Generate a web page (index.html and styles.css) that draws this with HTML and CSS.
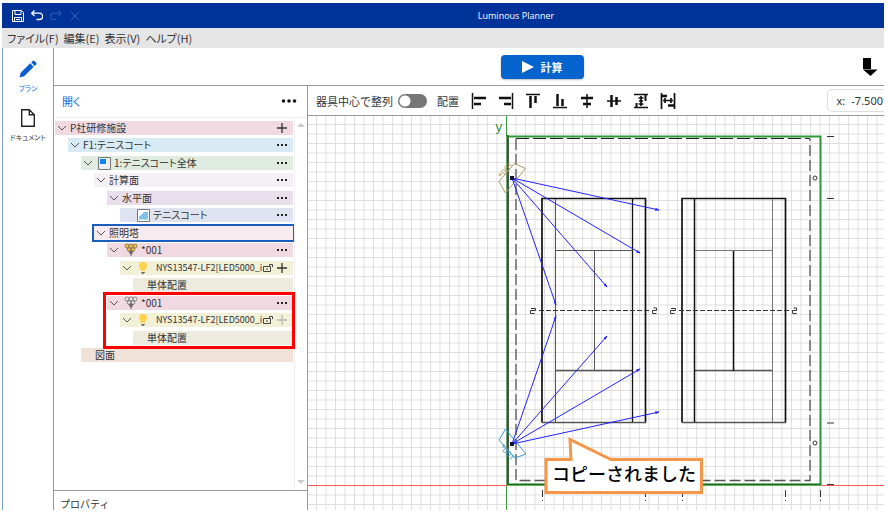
FILE: index.html
```html
<!DOCTYPE html>
<html lang="ja">
<head>
	<meta charset="UTF-8">
	<meta name="viewport" content="width=device-width, initial-scale=1">
	<title>Luminous Planner</title>
	<link rel="stylesheet" href="styles.css">
</head>
<body>
	<!-- shared icons -->
	<svg class="sprite" aria-hidden="true">
		<symbol id="chevron" viewBox="0 0 10 10"><path d="M1 3l4 4 4-4" fill="none" stroke="#555"/></symbol>
		<symbol id="dots" viewBox="0 0 12 12"><path d="M1 5h2v2H1zM5 5h2v2H5zM9 5h2v2H9z" fill="#222"/></symbol>
		<symbol id="plus" viewBox="0 0 12 12"><path d="M6 1v10M1 6h10" fill="none" stroke="currentColor" stroke-width="1.3"/></symbol>
		<symbol id="lamps" viewBox="0 0 14 14">
			<path d="M3 5l4 5 4-5M7 5v8M4 8h6M5 10h4" fill="none" stroke="#555"/>
			<g fill="currentColor" stroke="#666" stroke-width=".7">
				<circle cx="3" cy="3" r="2"/><circle cx="7" cy="3" r="2"/><circle cx="11" cy="3" r="2"/>
				<circle cx="5" cy="6.5" r="1.8"/><circle cx="9" cy="6.5" r="1.8"/>
			</g>
		</symbol>
		<symbol id="bulb" viewBox="0 0 10 14">
			<path d="M5 1a4 4 0 0 0-4 4c0 2 2 3 2 5h4c0-2 2-3 2-5a4 4 0 0 0-4-4z" fill="#ffd24d"/>
			<path d="M3 11h4v1H6v1H4v-1H3z" fill="#777"/>
		</symbol>
		<symbol id="lock" viewBox="0 0 11 10">
			<path d="M.5 3.500h7v5h-7zM6.500 3V1.500h3V4M4 5v2" fill="none" stroke="#444"/>
		</symbol>
	</svg>

	<div class="app">
		<header class="titlebar">
			<div class="quick">
				<button type="button" aria-label="保存"><svg viewBox="0 0 12 12"><path d="M.5.5h9l2 2v9H.500zM3 .5v4h6v-4M2.500 11.500v-4h7v4M4 9.500h4" fill="none" stroke="#fff"/></svg></button>
				<button type="button" aria-label="元に戻す"><svg viewBox="0 0 12 12"><path d="M3.500 .5L.7 3.200l2.800 2.800M1 3.200h7.500a3 3 0 0 1 0 6.300H5.500" fill="none" stroke="#fff" stroke-width="1.300"/></svg></button>
				<button type="button" aria-label="やり直し" disabled><svg viewBox="0 0 12 12"><path d="M8.500 .5l2.800 2.700-2.800 2.800M11 3.200H3.500a3 3 0 0 0 0 6.300h3" fill="none" stroke="#3a62b8"/></svg></button>
				<button type="button" aria-label="削除" disabled><svg viewBox="0 0 12 12"><path d="M2 2l8 8M10 2l-8 8" fill="none" stroke="#3a62b8"/></svg></button>
			</div>
			<h1>Luminous Planner</h1>
		</header>

		<nav class="menubar">
			<a href="#">ファイル(F)</a>
			<a href="#">編集(E)</a>
			<a href="#">表示(V)</a>
			<a href="#">ヘルプ(H)</a>
		</nav>

		<div class="body">
			<nav class="rail">
				<a href="#" class="active">
					<svg viewBox="0 0 18 18"><path d="M.5 17.500l1.200-4.700L11.200 3.300l3.500 3.500-9.500 9.500zM12.200 2.400l1.500-1.500q1-.7 1.800 0l1.700 1.700q.7.900 0 1.800l-1.500 1.500z" fill="#0a5fd0"/></svg>
					プラン
				</a>
				<a href="#">
					<svg viewBox="0 0 18 18"><path d="M2.700.7h7.600l5 5v11.600H2.700zM10.300.7v5h5" fill="none" stroke="#222" stroke-width="1.400"/></svg>
					ドキュメント
				</a>
			</nav>

			<div class="work">
				<div class="actions">
					<button type="button" class="calc">
						<svg viewBox="0 0 12 12"><path d="M0 0l12 6-12 6z" fill="#fff"/></svg>
						計算
					</button>
					<button type="button" class="more" aria-label="出力">
						<svg viewBox="0 0 16 18"><path d="M1 0h8v11H1z"/><path d="M1 11.500h14.500l-7 6.500z"/></svg>
					</button>
				</div>

				<div class="panes">
					<aside class="side">
						<div class="side-head">
							<a href="#">開く</a>
							<button type="button" aria-label="メニュー"><svg viewBox="0 0 16 6"><circle cx="2.500" cy="3" r="1.800"/><circle cx="8" cy="3" r="1.800"/><circle cx="13.500" cy="3" r="1.800"/></svg></button>
						</div>
						<div class="tree-wrap">
							<ul class="tree">
								<li class="row l0 pink">
									<svg class="tw"><use href="#chevron"/></svg><span>P社研修施設</span>
									<button type="button" aria-label="追加"><svg><use href="#plus"/></svg></button>
								</li>
								<li class="row l1 sky">
									<svg class="tw"><use href="#chevron"/></svg><span>F1:テニスコート</span>
									<button type="button" aria-label="メニュー"><svg><use href="#dots"/></svg></button>
								</li>
								<li class="row l2 green">
									<svg class="tw"><use href="#chevron"/></svg>
									<svg class="thumb" viewBox="0 0 13 13"><path d="M.5.500h12v12H.500z" fill="#e8eef4" stroke="#777"/><path d="M2 2h6v5H2z" fill="#0b85f0"/><path d="M8.500 3v5.500H3" fill="none" stroke="#fff"/></svg>
									<span>1:テニスコート全体</span>
									<button type="button" aria-label="メニュー"><svg><use href="#dots"/></svg></button>
								</li>
								<li class="row l3 lilac">
									<svg class="tw"><use href="#chevron"/></svg><span>計算面</span>
									<button type="button" aria-label="メニュー"><svg><use href="#dots"/></svg></button>
								</li>
								<li class="row l4 purple">
									<svg class="tw"><use href="#chevron"/></svg><span>水平面</span>
									<button type="button" aria-label="メニュー"><svg><use href="#dots"/></svg></button>
								</li>
								<li class="row l5 slate">
									<svg class="thumb leaf" viewBox="0 0 13 13"><path d="M.5.500h12v12H.500z" fill="#fff" stroke="#777"/><path d="M2 10.500V8l5-5h4v7.500z" fill="#7fc0ee"/></svg>
									<span>テニスコート</span>
									<button type="button" aria-label="メニュー"><svg><use href="#dots"/></svg></button>
								</li>
								<li class="row l3 rose selected">
									<svg class="tw"><use href="#chevron"/></svg><span>照明塔</span>
								</li>
								<li class="row l4 pink">
									<svg class="tw"><use href="#chevron"/></svg><svg class="lamps"><use href="#lamps"/></svg><span>*001</span>
									<button type="button" aria-label="メニュー"><svg><use href="#dots"/></svg></button>
								</li>
								<li class="row l5 yellow">
									<svg class="tw"><use href="#chevron"/></svg><svg class="bulb"><use href="#bulb"/></svg><span>NYS13547-LF2[LED5000_i</span>
									<svg class="lock"><use href="#lock"/></svg>
									<button type="button" aria-label="追加"><svg><use href="#plus"/></svg></button>
								</li>
								<li class="row l6 olive"><span>単体配置</span></li>
								<li class="copied">
									<ul class="tree-group">
										<li class="row l4 pink">
											<svg class="tw"><use href="#chevron"/></svg><svg class="lamps off"><use href="#lamps"/></svg><span>*001</span>
											<button type="button" aria-label="メニュー"><svg><use href="#dots"/></svg></button>
										</li>
										<li class="row l5 yellow">
											<svg class="tw"><use href="#chevron"/></svg><svg class="bulb"><use href="#bulb"/></svg><span>NYS13547-LF2[LED5000_i</span>
											<svg class="lock"><use href="#lock"/></svg>
											<button type="button" aria-label="追加" disabled><svg><use href="#plus"/></svg></button>
										</li>
										<li class="row l6 olive"><span>単体配置</span></li>
									</ul>
								</li>
								<li class="row l2 peach"><span>図面</span></li>
							</ul>
							<div class="scroll">
								<svg viewBox="0 0 8 4"><path d="M0 4l4-4 4 4z"/></svg>
								<svg viewBox="0 0 8 4"><path d="M0 0l4 4 4-4z"/></svg>
							</div>
						</div>
						<div class="props">プロパティ</div>
					</aside>

					<main class="main">
						<div class="tools">
							<label for="center">器具中心で整列</label>
							<input type="checkbox" id="center" class="switch">
							<span class="place">配置</span>
							<div class="aligns">
								<button type="button" aria-label="左揃え"><svg viewBox="0 0 16 16"><path d="M1.500 0v16" stroke-width="1.500"/><path d="M3 5h12M3 11h7" stroke-width="2.500"/></svg></button>
								<button type="button" aria-label="右揃え"><svg viewBox="0 0 16 16"><path d="M14.500 0v16" stroke-width="1.500"/><path d="M1 5h12M6 11h7" stroke-width="2.500"/></svg></button>
								<button type="button" aria-label="上揃え"><svg viewBox="0 0 16 16"><path d="M1 1.500h14" stroke-width="1.500"/><path d="M5.500 3v12M10.500 3v7" stroke-width="2.500"/></svg></button>
								<button type="button" aria-label="下揃え"><svg viewBox="0 0 16 16"><path d="M1 14.500h14" stroke-width="1.500"/><path d="M5.500 1v12M10.500 6v7" stroke-width="2.500"/></svg></button>
								<button type="button" aria-label="左右中央"><svg viewBox="0 0 16 16"><path d="M8 1v14" stroke-width="1.500"/><path d="M2 5h12M4 11h8" stroke-width="2.500"/></svg></button>
								<button type="button" aria-label="上下中央"><svg viewBox="0 0 16 16"><path d="M1 8h14" stroke-width="1.500"/><path d="M5.500 2v12M10.500 4v8" stroke-width="2.500"/></svg></button>
								<button type="button" aria-label="上下等間隔"><svg viewBox="0 0 16 16"><path d="M1 1.500h14M1 14.500h14M8 3v10M5.500 5h5M5.500 11h5M6 8h4" stroke-width="1.700"/><path d="M12.500 2v6M3.500 10v4" stroke-width="2"/></svg></button>
								<button type="button" aria-label="左右等間隔"><svg viewBox="0 0 16 16"><path d="M1.500 0v16M14.500 0v16M3 7.500h10M5 5v5M11 5v5" stroke-width="1.700"/><path d="M2 3h5M8 12.500h6" stroke-width="2.500"/></svg></button>
							</div>
							<div class="coord"><span>x:</span><span>-7.500</span></div>
						</div>

						<!-- drawing area, one grid square is 9.5 units -->
						<svg class="plan" role="img" aria-label="平面図">
							<defs>
								<pattern id="grid" x="506" y="485" width="9.5" height="9.5" patternUnits="userSpaceOnUse">
									<path d="M.5 0v9.500M0 .5h9.500" stroke="#dedede" fill="none"/>
								</pattern>
								<marker id="tip" viewBox="0 0 6 4" refX="5" refY="2" markerWidth="5" markerHeight="3" orient="auto"><path d="M0 0l6 2-6 2z" fill="#22f"/></marker>
							</defs>
							<g transform="translate(-308 -116)" fill="none">
								<rect x="308" y="116" width="2000" height="2000" fill="url(#grid)"/>
								<path d="M308 485.500H507" stroke="#ff5a5a"/>
								<path d="M821 485.500H2308" stroke="#ff5a5a"/>
								<path d="M506.500 116v20M506.500 486v30" stroke="#3d9a3d"/>
								<path d="M508 136.500h312.500V485" stroke="#2f9a36" stroke-width="2"/>
								<path d="M507.500 135v349.500H821" stroke="#0c700c" stroke-width="2"/>
								<path d="M508.500 138v345" stroke="#000" stroke-opacity=".5"/>

								<path d="M516 138.500h294" stroke="#222" stroke-dasharray="13 4"/>
								<path d="M516 139v341.500h294V139" stroke="#555" stroke-width="1.300" stroke-dasharray="11 4"/>

								<!-- left court -->
								<path d="M542 422.500v-224h103.500v224" stroke="#111" stroke-width="1.700"/>
								<path d="M542 422.500h104M555.500 370.500h77" stroke="#555" stroke-width="1.500"/>
								<path d="M632.500 199v223" stroke="#111" stroke-width="1.300"/>
								<path d="M555.500 199v223M594.500 250v121M555.500 250.500h77" stroke="#555"/>

								<!-- right court -->
								<path d="M682 422.500v-224h103.500v224" stroke="#111" stroke-width="1.700"/>
								<path d="M682 422.500h104M695 370.500h77" stroke="#555" stroke-width="1.500"/>
								<path d="M694.500 199v223M733.500 250v121" stroke="#111" stroke-width="1.500"/>
								<path d="M772.500 199v223M695 250.500h77" stroke="#777"/>

								<path d="M539 310.500h110M679 310.500h110" stroke="#333" stroke-dasharray="5 2"/>
								<path d="M531 308.500h4.500v2h-5v3h4M652.500 313.500h4M652.500 313v-2.500h4v-2.500h-3M671 308.500h4.500v2h-5v3h4M792.500 313.500h4M792.500 313v-2.500h4v-2.500h-3" stroke="#333"/>
								<circle cx="815" cy="178" r="2" stroke="#333"/>
								<circle cx="815" cy="443" r="2" stroke="#333"/>

								<path d="M827 136.500h10M827 198.500h10M827 423h10M827 484.500h10M542.500 490v12M645.500 490v12M682.500 490v12M785.500 490v12M820.500 490v12" stroke="#333" stroke-dasharray="7 3 1 9"/>

								<path d="M514.500 163.500l11 5-20 24.500-6.500-11.500z" stroke="#a99b63"/>
								<path d="M505.500 429l20.500 25-11 4-16-18z" stroke="#3a99d8"/>
								<g stroke="#22f" marker-end="url(#tip)">
									<path d="M512 178l147 32"/><path d="M512 178l128 75"/><path d="M512 178l95 109"/><path d="M512 178l44 127"/>
									<path d="M512 444l147-32"/><path d="M512 444l128-75"/><path d="M512 444l95-108"/><path d="M512 444l44-128"/>
								</g>
								<path d="M510 176h4v4h-4zM510 442h4v4h-4z" fill="#113"/>
								<text class="tag" fill="#a99b63" transform="translate(502 179) rotate(-50)">*001</text>
								<text class="tag" fill="#3a99d8" transform="translate(499 447) rotate(50)">*001</text>
								<text class="axis" x="495" y="131">y</text>

								<path d="M546 459.500h25l-1-20 41 20h90.500v33H546z" fill="#fff" stroke="#f79646" stroke-width="3"/>
								<text class="callout" x="624" y="481" text-anchor="middle">コピーされました</text>
							</g>
						</svg>
					</main>
				</div>
			</div>
		</div>
	</div>
</body>
</html>
```

FILE: styles.css
```css
* {
	box-sizing: border-box;
}

body {
	margin: 0;
	font-family: "Noto Sans", "Noto Sans CJK JP", sans-serif;
	font-size: 11px;
	color: #333;
	background: #fff;
}

button {
	padding: 0;
	border: none;
	background: none;
	font: inherit;
	color: inherit;
	cursor: pointer;
}

a {
	color: inherit;
	text-decoration: none;
}

svg {
	display: block;
	flex: none;
}

ul {
	margin: 0;
	padding: 0;
	list-style: none;
}

.sprite {
	position: absolute;
	width: 0;
	height: 0;
}

.app {
	display: flex;
	flex-direction: column;
	height: 100vh;
	padding: 3px 4px 3px 2px;
	overflow: hidden;
}

.titlebar {
	display: grid;
	grid-template-columns: 1fr auto 1fr;
	align-items: center;
	flex: none;
	height: 25px;
	padding: 0 0 0 10px;
	background: #003399;
}

.titlebar h1 {
	margin: 0;
	padding-left: 136px;
	font-family: "Open Sans", sans-serif;
	font-size: 9px;
	font-weight: normal;
	color: #fff;
}

.quick {
	display: flex;
	gap: 7px;
}

.quick svg {
	width: 12px;
	height: 12px;
}

.menubar {
	display: flex;
	align-items: center;
	gap: 5px;
	flex: none;
	height: 20px;
	padding-left: 5px;
	background: #e5e5e5;
	font-family: "Noto Sans CJK JP", sans-serif;
	font-feature-settings: "palt";
}

.body {
	display: flex;
	flex: 1;
	min-height: 0;
	border-left: 1px solid #7d9bd6;
}

.rail {
	display: flex;
	flex-direction: column;
	gap: 15px;
	flex: none;
	width: 51px;
	padding-top: 12px;
	border-right: 1px solid #999;
	font-size: 7px;
	font-feature-settings: "palt";
}

.rail a {
	display: flex;
	flex-direction: column;
	align-items: center;
	gap: 5px;
	line-height: 11px;
}

.rail svg {
	width: 18px;
	height: 18px;
}

.rail .active {
	color: #0a6fd8;
}

.work {
	display: flex;
	flex-direction: column;
	flex: 1;
	min-width: 0;
}

.actions {
	display: grid;
	grid-template-columns: 1fr auto 1fr;
	align-items: center;
	flex: none;
	height: 38px;
	padding-right: 6px;
	border-bottom: 1px solid #999;
}

.calc {
	display: flex;
	grid-column: 2;
	align-items: center;
	justify-content: center;
	gap: 7px;
	width: 83px;
	height: 24px;
	margin-left: 152px;
	border-radius: 4px;
	background: #0563cd;
	box-shadow: 0 1px 2px #bbb;
	font-weight: bold;
	color: #fff;
}

.calc svg {
	width: 12px;
	height: 12px;
}

.more {
	justify-self: end;
}

.more svg {
	width: 16px;
	height: 18px;
}

.panes {
	display: flex;
	flex: 1;
	min-height: 0;
}

.side {
	display: flex;
	flex-direction: column;
	flex: none;
	width: 254px;
	border-right: 1px solid #999;
}

.side-head {
	display: flex;
	align-items: center;
	justify-content: space-between;
	flex: none;
	height: 32px;
	padding: 0 10px 2px 8px;
	border-bottom: 1px solid #eee;
	font-feature-settings: "palt";
	color: #0a6fd8;
}

.side-head svg {
	width: 16px;
	height: 6px;
	fill: #111;
}

.tree-wrap {
	display: flex;
	flex: 1;
	min-height: 0;
}

.tree,
.tree-group {
	display: flex;
	flex-direction: column;
	gap: 3px;
}

.tree {
	flex: 1;
	min-width: 0;
	padding: 2px 1px 0;
	font-family: "Noto Sans CJK JP", sans-serif;
	font-size: 10px;
	font-feature-settings: "palt";
}

.row {
	display: flex;
	align-items: center;
	flex: none;
	height: 14px;
	padding: 0 5px 0 2px;
	line-height: 14px;
	white-space: nowrap;
}

.row:nth-child(odd) {
	margin-top: 1px;
}

.row span {
	flex: 1;
	min-width: 0;
	margin-left: 3px;
}

.row button svg {
	width: 12px;
	height: 12px;
}

.row button:disabled {
	color: #bbb;
}

.row .tw {
	width: 10px;
	height: 10px;
}

.row .thumb {
	width: 13px;
	height: 13px;
	margin-left: 5px;
}

.row .leaf {
	margin-left: 15px;
}

.row .lamps {
	width: 14px;
	height: 14px;
	margin-left: 5px;
	color: #ffc22e;
}

.row .off {
	color: #e4e4e4;
}

.row .bulb {
	width: 10px;
	height: 14px;
	margin-left: 6px;
}

.row .bulb + span {
	margin-left: 8px;
	font-size: 9px;
}

.row .lock {
	width: 11px;
	height: 10px;
	margin-right: 2px;
}

.l1 { margin-left: 13px; }
.l2 { margin-left: 26px; }
.l3 { margin-left: 39px; }
.l4 { margin-left: 52px; }
.l5 { margin-left: 65px; }
.l6 { margin-left: 78px; }

.pink { background: #f0d9e1; }
.sky { background: #d8eaf3; }
.green { background: #e0ece0; }
.lilac { background: #f5eff6; }
.purple { background: #e9deeb; }
.slate { background: #dfe3ef; }
.rose { background: #f8ebef; }
.yellow { background: #f2f0d7; }
.olive { background: #ecebdd; }
.peach { background: #f1e2d8; }

.olive span,
.peach span {
	margin-left: 12px;
}

.selected {
	outline: 2px solid #1a5fc0;
}

.copied {
	position: relative;
}

/* frame around the rows that were just copied */
.copied::after {
	content: "";
	position: absolute;
	inset: -3px -2px -4px 48px;
	border: 3px solid #f00;
	pointer-events: none;
}

.scroll {
	display: flex;
	flex-direction: column;
	align-items: center;
	justify-content: space-between;
	flex: none;
	width: 13px;
	padding: 5px 0 6px;
	border-left: 1px solid #eee;
}

.scroll svg {
	width: 8px;
	height: 4px;
	fill: #ccc;
}

.props {
	flex: none;
	height: 20px;
	padding: 6px 6px 0;
	border-top: 1px solid #999;
	line-height: 13px;
	font-family: "Noto Sans CJK JP", sans-serif;
	font-size: 10px;
}

.main {
	display: flex;
	flex-direction: column;
	flex: 1;
	min-width: 0;
}

.tools {
	display: flex;
	align-items: center;
	flex: none;
	height: 30px;
	padding-left: 8px;
	border-bottom: 1px solid #999;
	white-space: nowrap;
	overflow: hidden;
}

.switch {
	appearance: none;
	flex: none;
	width: 29px;
	height: 14px;
	margin: 0 10px 0 5px;
	border-radius: 7px;
	background: radial-gradient(circle at 7px 7px, #fff 5px, #777 6px);
}

.aligns {
	display: flex;
	gap: 11px;
	margin-left: 12px;
}

.aligns svg {
	width: 16px;
	height: 16px;
	fill: none;
	stroke: #111;
}

.coord {
	display: flex;
	gap: 6px;
	flex: none;
	margin-left: auto;
	padding: 0 1px 0 9px;
	border: 1px solid #ddd;
	border-right: none;
	border-radius: 5px 0 0 5px;
	font-size: 11px;
	line-height: 21px;
}

.plan {
	flex: 1;
	width: 100%;
	min-height: 0;
}

.tag {
	font-size: 8px;
}

.axis {
	font-family: "Liberation Mono", monospace;
	font-size: 13px;
	fill: #2f8a2f;
}

.callout {
	font-family: "Noto Sans CJK JP", sans-serif;
	font-size: 18px;
	font-weight: 500;
	fill: #000;
}
```
